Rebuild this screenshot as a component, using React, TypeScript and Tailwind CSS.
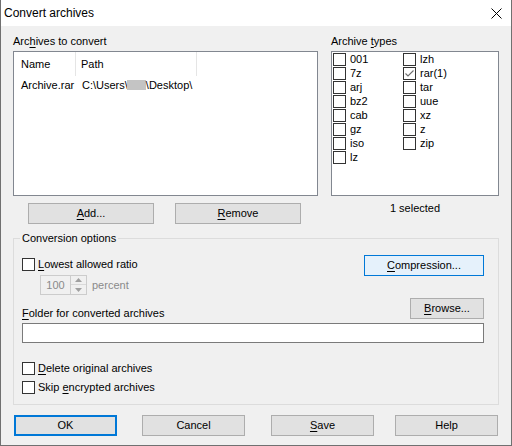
import React from "react";

const U = ({ children }: { children: React.ReactNode }) => (
  <span className="underline decoration-1 underline-offset-[2px]">{children}</span>
);

function Box({ checked }: { checked?: boolean }) {
  return (
    <span className="w-[13px] h-[13px] border border-[#333333] bg-white shrink-0 flex items-center justify-center">
      {checked && (
        <svg width="11" height="11" viewBox="0 0 11 11">
          <polyline points="1.5,5.5 4,8 9.5,2.5" fill="none" stroke="#6d6d6d" strokeWidth="1.1" />
        </svg>
      )}
    </span>
  );
}

function Btn({ className, children }: { className: string; children: React.ReactNode }) {
  return (
    <div className={"h-[21px] flex items-center justify-center shrink-0 " + className}>
      <span>{children}</span>
    </div>
  );
}

const col1 = ["001", "7z", "arj", "bz2", "cab", "gz", "iso", "lz"];
const col2 = ["lzh", "rar(1)", "tar", "uue", "xz", "z", "zip"];

export default function App() {
  const types = [...col1, ...col2];
  return (
    <div className="w-[512px] h-[446px] bg-[#f0f0f0] border-x border-b border-[#707070] font-['Liberation_Sans',Arial,sans-serif] text-[11px] text-black flex flex-col overflow-hidden">
      {/* Title bar */}
      <div className="h-[26px] bg-white flex items-center justify-between pl-[3px] pr-[9px] shrink-0">
        <span className="text-[12px] leading-[16px]">Convert archives</span>
        <svg width="11" height="11" viewBox="0 0 11 11">
          <path d="M0.5 0.5 L10.5 10.5 M10.5 0.5 L0.5 10.5" stroke="#000" strokeWidth="1" fill="none" />
        </svg>
      </div>

      <div className="flex flex-col pl-[12px] pr-[12px] pt-[8px]">
        {/* Top section */}
        <div className="flex gap-[13px]">
          <div className="w-[305px] flex flex-col">
            <div className="h-[15px] leading-[15px]">
              Arc<U>h</U>ives to convert
            </div>
            <div className="mt-[2px] h-[145px] border border-[#828790] bg-white flex flex-col">
              <div className="h-[24px] flex">
                <div className="w-[62px] h-full border-r border-[#e5e5e5] pl-[7px] flex items-center">Name</div>
                <div className="w-[121px] h-full border-r border-[#e5e5e5] pl-[5px] flex items-center">Path</div>
              </div>
              <div className="mt-[1px] h-[16px] flex items-center">
                <div className="w-[62px] pl-[7px]">Archive.rar</div>
                <div className="pl-[6px] flex items-center whitespace-pre">
                  <span>C:\Users\</span>
                  <span className="inline-block w-[19px] h-[10px] bg-[#c4c4c4] -ml-[1px]" />
                  <span>\Desktop\</span>
                </div>
              </div>
            </div>
            <div className="mt-[7px] flex">
              <Btn className="ml-[15px] w-[126px] bg-[#e1e1e1] border border-[#adadad]">
                <U>A</U>dd...
              </Btn>
              <Btn className="ml-[21px] w-[126px] bg-[#e1e1e1] border border-[#adadad]">
                <U>R</U>emove
              </Btn>
            </div>
          </div>
          <div className="w-[168px] flex flex-col">
            <div className="h-[15px] leading-[15px]">
              Archive <U>t</U>ypes
            </div>
            <div className="mt-[2px] h-[145px] border border-[#828790] bg-white pl-[1px] pt-[1px]">
              <div className="grid grid-flow-col grid-rows-[repeat(8,14px)] grid-cols-[70px_70px]">
                {types.map((t) => (
                  <div key={t} className="flex items-start h-[14px]">
                    <Box checked={t === "rar(1)"} />
                    <span className="ml-[4px] leading-[13px]">{t}</span>
                  </div>
                ))}
              </div>
            </div>
            <div className="mt-[5px] h-[15px] leading-[15px] text-center">1 selected</div>
          </div>
        </div>

        {/* Conversion options */}
        <fieldset className="mt-[7px] border border-[#dcdcdc] pl-[6px] pr-[14px] pb-[9px]">
          <legend className="px-[2px] h-[15px] leading-[15px]">Conversion options</legend>
          <div className="pl-[2px] flex flex-col">
            <div className="mt-[9px] flex justify-between">
              <div className="flex flex-col">
                <div className="mt-[2px] h-[15px] flex items-center">
                  <Box />
                  <span className="ml-[3px]">
                    <U>L</U>owest allowed ratio
                  </span>
                </div>
                <div className="mt-[3px] ml-[18px] flex items-center">
                  <div className="w-[47px] h-[20px] border border-[#cccccc] bg-[#f0f0f0] flex">
                    <div className="w-[29px] flex items-center justify-center text-[#8a8a8a]">100</div>
                    <div className="w-[16px] flex flex-col border-l border-[#cccccc]">
                      <div className="h-[9px] flex items-center justify-center border-b border-[#d9d9d9]">
                        <svg width="7" height="4" viewBox="0 0 7 4">
                          <path d="M0 4 L3.5 0 L7 4 Z" fill="#a0a0a0" />
                        </svg>
                      </div>
                      <div className="flex-1 flex items-center justify-center">
                        <svg width="7" height="4" viewBox="0 0 7 4">
                          <path d="M0 0 L3.5 4 L7 0 Z" fill="#a0a0a0" />
                        </svg>
                      </div>
                    </div>
                  </div>
                  <span className="ml-[5px] text-[#8a8a8a]">percent</span>
                </div>
                <div className="mt-[11px] h-[15px] leading-[15px]">
                  <U>F</U>older for converted archives
                </div>
              </div>
              <div className="flex flex-col items-end">
                <Btn className="w-[120px] bg-[#e5f1fb] border border-[#0078d7]">
                  <U>C</U>ompression...
                </Btn>
                <Btn className="mt-[22px] w-[74px] bg-[#e1e1e1] border border-[#adadad]">
                  <U>B</U>rowse...
                </Btn>
              </div>
            </div>
            <div className="mt-[2px] h-[20px] border border-[#7a7a7a] bg-white" />
            <div className="mt-[18px] h-[15px] flex items-center">
              <Box />
              <span className="ml-[3px]">
                <U>D</U>elete original archives
              </span>
            </div>
            <div className="mt-[4px] h-[15px] flex items-center">
              <Box />
              <span className="ml-[3px]">
                Skip <U>e</U>ncrypted archives
              </span>
            </div>
          </div>
        </fieldset>

        {/* Bottom buttons */}
        <div className="mt-[10px] flex">
          <Btn className="ml-[1px] w-[103px] bg-[#e1e1e1] border-2 border-[#0078d7]">OK</Btn>
          <Btn className="ml-[25px] w-[103px] bg-[#e1e1e1] border border-[#adadad]">Cancel</Btn>
          <Btn className="ml-[26px] w-[103px] bg-[#e1e1e1] border border-[#adadad]">
            <U>S</U>ave
          </Btn>
          <Btn className="ml-[21px] w-[103px] bg-[#e1e1e1] border border-[#adadad]">Help</Btn>
        </div>
      </div>
    </div>
  );
}
